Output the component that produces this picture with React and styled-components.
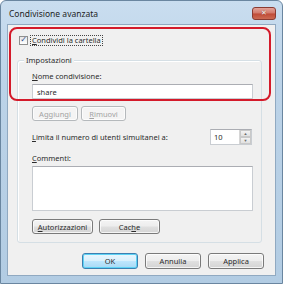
import React from "react";
import styled, { createGlobalStyle } from "styled-components";

const GlobalStyle = createGlobalStyle`
  html, body {
    margin: 0;
    padding: 0;
    background: #fff;
  }
  body {
    font-family: "Noto Sans", "Open Sans", sans-serif;
    font-size: 7.5px;
    color: #2b2b2b;
  }
`;

const Window = styled.div`
  width: 283px;
  height: 284px;
  box-sizing: border-box;
  border: 1px solid #6a86a0;
  border-radius: 6px 6px 0 0;
  background: linear-gradient(#c9ddef 0%, #bcd3e8 30%, #b2cce3 100%);
  display: flex;
  flex-direction: column;
  position: relative;
  overflow: hidden;
`;

const TitleBar = styled.div`
  height: 23px;
  display: flex;
  align-items: center;
  justify-content: space-between;
  padding: 0 6px 0 8px;
`;

const Title = styled.span`
  font-size: 8.5px;
  color: #1e1e1e;
  margin-top: 2px;
`;

const CloseButton = styled.div`
  width: 22px;
  height: 11px;
  border: 1px solid #8a3b32;
  border-radius: 3px;
  background: linear-gradient(#e3a399 0%, #d27768 48%, #bf4a36 52%, #cc6a52 100%);
  display: flex;
  align-items: center;
  justify-content: center;
  color: #fff;
  font-family: "DejaVu Sans", sans-serif;
  font-weight: bold;
  font-size: 7px;
  line-height: 1;
  text-shadow: 0 0 1px #6b1d14;
  margin-top: 1px;
`;

const Client = styled.div`
  flex: 1;
  margin: 0 6px 7px 6px;
  background: #f0f0f0;
  border: 1px solid #90a9c1;
  position: relative;
  display: flex;
  flex-direction: column;
`;

const Highlight = styled.div`
  position: absolute;
  left: 1px;
  top: 2px;
  width: 262px;
  height: 74px;
  box-sizing: border-box;
  border: 2px solid #d41a2a;
  border-radius: 8px;
  pointer-events: none;
`;

const CheckRow = styled.label`
  display: flex;
  align-items: center;
  gap: 3px;
  margin: 10px 0 0 11px;
  height: 10px;
`;

const CheckBox = styled.span`
  width: 7px;
  height: 7px;
  border: 1px solid #8e8f8f;
  background: linear-gradient(#e6e6e6, #ffffff);
  display: flex;
  align-items: center;
  justify-content: center;
  color: #2d4a8c;
  font-size: 8px;
  line-height: 1;
  font-family: "DejaVu Sans", sans-serif;
`;

const FocusText = styled.span`
  outline: 1px dotted #444;
  padding: 0 1px;
  line-height: 9px;
`;

const GroupBox = styled.div`
  margin: 15px 13px 0 9px;
  height: 181px;
  border: 1px solid #d5dfe5;
  border-radius: 3px;
  box-shadow: inset 1px 1px 0 #fff;
  position: relative;
  display: flex;
  flex-direction: column;
  padding: 0 8px 0 14px;
`;

const Legend = styled.span`
  position: absolute;
  top: -6px;
  left: 6px;
  padding: 0 2px;
  background: #f0f0f0;
  line-height: 11px;
`;

const FieldLabel = styled.div`
  line-height: 10px;
  margin-top: ${(p) => p.$top}px;
`;

const TextInput = styled.div`
  height: 15px;
  box-sizing: border-box;
  border: 1px solid #c9cdd2;
  border-top-color: #abadb3;
  background: #fff;
  margin-top: 3px;
  padding: 0 4px;
  display: flex;
  align-items: center;
`;

const ButtonRow = styled.div`
  display: flex;
  gap: ${(p) => p.$gap || 3}px;
  margin-top: ${(p) => p.$top}px;
  justify-content: ${(p) => (p.$end ? "flex-end" : "flex-start")};
  padding: ${(p) => p.$pad || "0"};
`;

const Button = styled.div`
  width: ${(p) => p.$w}px;
  height: ${(p) => p.$h || 15}px;
  box-sizing: border-box;
  border: 1px solid ${(p) => (p.$disabled ? "#b5b9bc" : p.$default ? "#3c7fb1" : "#7a7a7a")};
  border-radius: 3px;
  background: ${(p) =>
    p.$disabled
      ? "#f4f4f4"
      : p.$default
      ? "linear-gradient(#eaf6fd 0%, #d9f0fc 48%, #bee6fd 52%, #a7d9f5 100%)"
      : "linear-gradient(#f4f4f4 0%, #ededed 48%, #e0e0e0 52%, #d4d4d4 100%)"};
  box-shadow: inset 0 0 0 1px ${(p) => (p.$default ? "#5ed3f5" : "rgba(255,255,255,0.75)")};
  color: ${(p) => (p.$disabled ? "#a3a3a3" : "#2b2b2b")};
  display: flex;
  align-items: center;
  justify-content: center;
`;

const LimitRow = styled.div`
  display: flex;
  align-items: center;
  justify-content: space-between;
  margin-top: 8px;
`;

const SpinBox = styled.div`
  width: 42px;
  height: 16px;
  box-sizing: border-box;
  border: 1px solid #c9cdd2;
  border-top-color: #abadb3;
  background: #fff;
  display: flex;
  align-items: stretch;
  margin-right: 1px;
`;

const SpinValue = styled.div`
  flex: 1;
  display: flex;
  align-items: center;
  padding-left: 3px;
`;

const SpinArrows = styled.div`
  width: 11px;
  display: flex;
  flex-direction: column;
  border-left: 1px solid #d6d6d6;
`;

const SpinArrow = styled.div`
  flex: 1;
  background: linear-gradient(#f3f3f3, #e1e1e1);
  border: 1px solid #c9c9c9;
  display: flex;
  align-items: center;
  justify-content: center;
  color: #6a6a6a;
  font-size: 4px;
  line-height: 1;
`;

const TextArea = styled.div`
  height: 45px;
  box-sizing: border-box;
  border: 1px solid #c9cdd2;
  border-top-color: #abadb3;
  background: #fff;
  margin-top: 3px;
`;

const U = styled.span`
  text-decoration: underline;
`;

export default function App() {
  return (
    <>
      <GlobalStyle />
      <Window>
        <TitleBar>
          <Title>Condivisione avanzata</Title>
          <CloseButton>✕</CloseButton>
        </TitleBar>
        <Client>
          <CheckRow>
            <CheckBox>✓</CheckBox>
            <FocusText>
              <U>C</U>ondividi la cartella
            </FocusText>
          </CheckRow>
          <GroupBox>
            <Legend>Impostazioni</Legend>
            <FieldLabel $top={10}>
              <U>N</U>ome condivisione:
            </FieldLabel>
            <TextInput>share</TextInput>
            <ButtonRow $top={7}>
              <Button $w={46} $disabled>
                Aggiungi
              </Button>
              <Button $w={45} $disabled>
                <U>R</U>imuovi
              </Button>
            </ButtonRow>
            <LimitRow>
              <span>
                <U>L</U>imita il numero di utenti simultanei a:
              </span>
              <SpinBox>
                <SpinValue>10</SpinValue>
                <SpinArrows>
                  <SpinArrow>▲</SpinArrow>
                  <SpinArrow>▼</SpinArrow>
                </SpinArrows>
              </SpinBox>
            </LimitRow>
            <FieldLabel $top={8}>
              <U>C</U>ommenti:
            </FieldLabel>
            <TextArea />
            <ButtonRow $top={8} $gap={6}>
              <Button $w={61}>
                <span>
                  <U>A</U>utorizzazioni
                </span>
              </Button>
              <Button $w={61}>
                <span>
                  Cac<U>h</U>e
                </span>
              </Button>
            </ButtonRow>
          </GroupBox>
          <ButtonRow $top={10} $gap={7} $end $pad="0 11px 0 0">
            <Button $w={56} $h={16} $default>
              OK
            </Button>
            <Button $w={56} $h={16}>
              Annulla
            </Button>
            <Button $w={56} $h={16}>
              Applica
            </Button>
          </ButtonRow>
          <Highlight />
        </Client>
      </Window>
    </>
  );
}
